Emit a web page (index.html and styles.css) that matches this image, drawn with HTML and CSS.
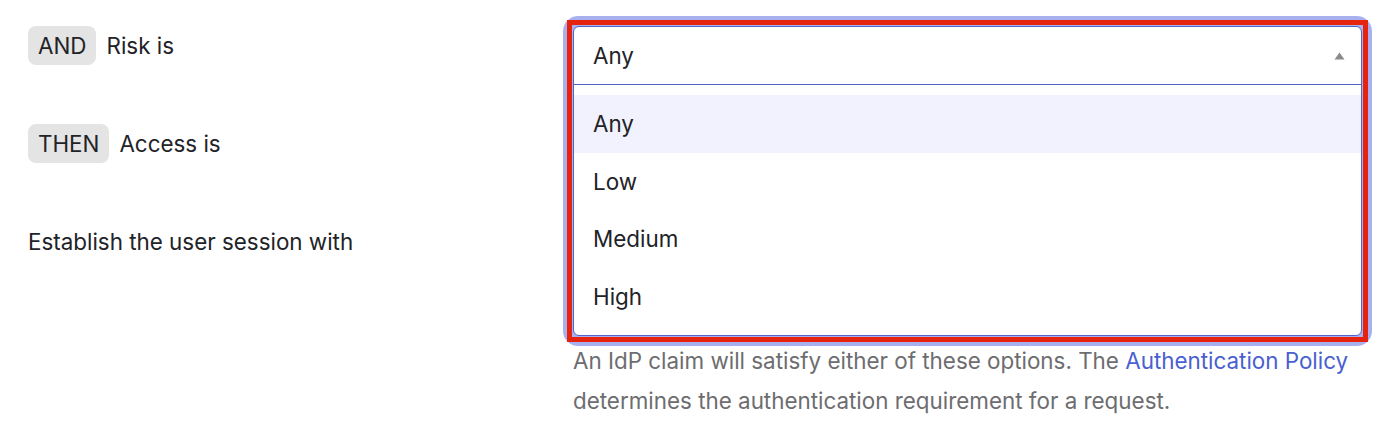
FILE: index.html
```html
<!DOCTYPE html>
<html lang="en">
<head>
<meta charset="utf-8">
<title>Rule</title>
<link rel="stylesheet" href="styles.css">
</head>
<body>
<form class="rule">
  <div class="row">
    <div class="label"><span class="badge">AND</span><span>Risk is</span></div>
    <div class="field">
      <div class="select-spacer"></div>
      <div class="dropdown" role="listbox">
        <div class="trigger">
          <span>Any</span>
          <svg class="caret" width="11" height="8" viewBox="0 0 11 8"><path d="M5.5 0.5 L10.5 7.5 L0.5 7.5 Z" fill="#8a8a8a"/></svg>
        </div>
        <ul class="options">
          <li class="option active">Any</li>
          <li class="option">Low</li>
          <li class="option">Medium</li>
          <li class="option">High</li>
        </ul>
      </div>
    </div>
  </div>
  <div class="row">
    <div class="label"><span class="badge">THEN</span><span>Access is</span></div>
    <div class="field"><div class="select-spacer"></div></div>
  </div>
  <div class="row">
    <div class="label label-plain">Establish the user session with</div>
    <div class="field">
      <div class="options-spacer"></div>
      <p class="help">An IdP claim will satisfy either of these options. The <a href="#">Authentication Policy</a> determines the authentication requirement for a request.</p>
    </div>
  </div>
</form>
</body>
</html>
```
FILE: styles.css
```css
html, body {
  margin: 0;
  padding: 0;
  background: #ffffff;
}
body {
  font-family: Inter, "Noto Sans", sans-serif;
  font-size: 22.4px;
  color: #222327;
}
.rule {
  display: flex;
  flex-direction: column;
  gap: 40px;
  padding: 26px 38px 0 28px;
}
.row {
  display: grid;
  grid-template-columns: 545px 789px;
}
.label {
  display: flex;
  align-items: center;
  gap: 10px;
  height: 39px;
}
.label-plain {
  line-height: 39px;
}
.badge {
  display: inline-flex;
  align-items: center;
  height: 39px;
  padding: 0 10px;
  border-radius: 8px;
  background: #e4e4e4;
}
.field {
  position: relative;
}
.select-spacer {
  height: 58px;
}
.options-spacer {
  height: 119px;
}
.dropdown {
  position: absolute;
  top: 0;
  left: 0;
  right: 0;
  z-index: 2;
  background: #ffffff;
  border: 1px solid #5264c6;
  border-radius: 6px;
  box-shadow: 0 0 0 10px #a9b0f0;
}
.dropdown::after {
  content: "";
  position: absolute;
  top: -7px;
  left: -7px;
  right: -7px;
  bottom: -7px;
  border: 5px solid #e6230f;
  pointer-events: none;
}
.trigger {
  display: flex;
  align-items: center;
  justify-content: space-between;
  height: 57px;
  padding: 0 16px 0 19px;
  border-bottom: 1px solid #5264c6;
}
.caret {
  margin-top: 1px;
}
.options {
  list-style: none;
  margin: 0;
  padding: 10px 0;
}
.option {
  display: flex;
  align-items: center;
  height: 57.5px;
  padding-left: 19px;
}
.option.active {
  background: #f1f2fd;
}
.help {
  margin: 0;
  line-height: 40px;
  color: #6d6d70;
}
.help a {
  color: #4a5fd1;
  text-decoration: none;
}
```
